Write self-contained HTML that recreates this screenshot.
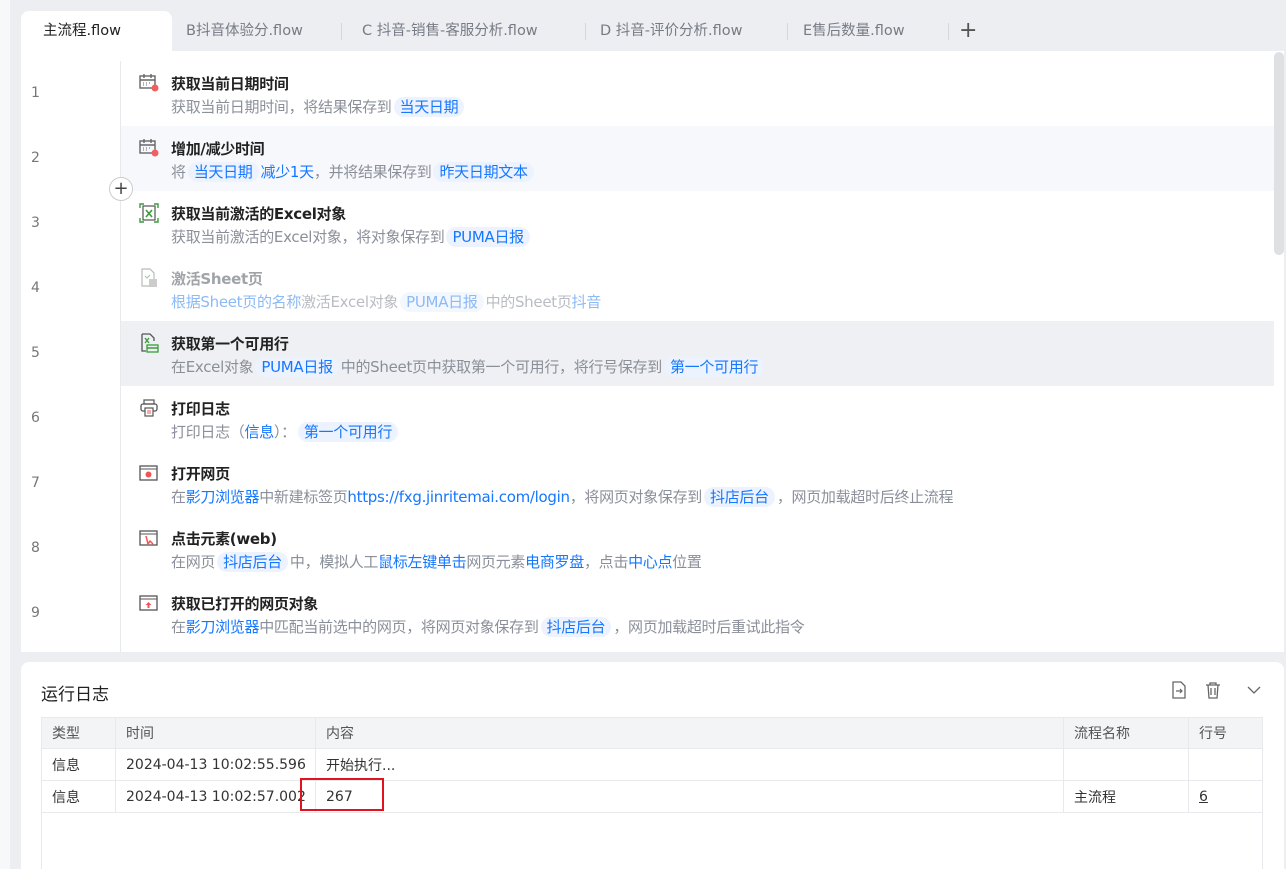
<!DOCTYPE html>
<html><head><meta charset="utf-8"><style>
*{margin:0;padding:0;box-sizing:border-box}
html,body{width:1286px;height:869px;overflow:hidden}
body{background:#eceef2;font-family:"DejaVu Sans","Noto Sans CJK SC",sans-serif;position:relative}
.lstrip{position:absolute;left:0;top:0;width:10px;height:869px;background:#f7f8fa}
.tabs{position:absolute;left:21px;top:11px;height:41px;width:1263px}
.tab{position:absolute;top:0;height:41px;line-height:40px;font-size:14.5px;color:#777b85}
.tab.active{background:#fff;border-radius:8px 8px 0 0;color:#222;padding-left:22px;width:151px;left:0}
.sep{position:absolute;top:12px;width:1px;height:17px;background:#d5d7dc}
.panel{position:absolute;left:21px;top:51px;width:1263px;height:601px;background:#fff;overflow:hidden}
.gut{position:absolute;left:99px;top:10px;width:1px;height:600px;background:#e8e9ec}
.row{position:absolute;left:100px;width:1153px;height:65px}
.num{position:absolute;left:10px;font-size:14px;color:#777}
.ic{position:absolute;left:18px;top:12px;width:20px;height:20px}
.t{position:absolute;left:50px;top:12px;font-size:15px;font-weight:bold;color:#222;letter-spacing:-0.3px}
.d{position:absolute;left:50px;top:35px;font-size:15px;color:#8a8f99;white-space:nowrap;letter-spacing:-0.3px}
.b{color:#1677ff}
.tag{background:#edf3fe;color:#1677ff;border-radius:10px;padding:1px 6px;margin:0 2px}
.dim .t{color:#a0a3a8}.dim .d{color:#b9bcc2}.dim .b{color:#8dbaf5}.dim .tag{color:#8dbaf5;background:#f3f7fe}
.scroll{position:absolute;left:1253px;top:1px;width:10px;height:203px;background:#dfe0e4;border-radius:5px}
.plus{position:absolute;left:109px;top:177px;width:24px;height:24px;border-radius:50%;border:1px solid #ccc;background:#fff;text-align:center;line-height:21px;font-size:18px;color:#444}
.log{position:absolute;left:21px;top:662px;width:1263px;height:207px;background:#fff;border-radius:8px 8px 0 0;overflow:hidden}
.lt{position:absolute;left:20px;top:18px;font-size:17px;color:#222}
table{position:absolute;left:20px;top:55px;width:1222px;border-collapse:collapse;font-size:14px;color:#333}
td{border:1px solid #e8e9ec;height:32px;padding-left:10px;white-space:nowrap}
tr.h td{background:#f3f4f6;height:31px;color:#555}
.empty{position:absolute;left:20px;top:150px;width:1222px;height:80px;border-left:1px solid #e8e9ec;border-right:1px solid #e8e9ec}
.red{position:absolute;left:279px;top:116px;width:84px;height:33px;border:2px solid #e0141e}
</style></head><body>
<div class="lstrip"></div>
<div class="tabs">
<div class="tab active">主流程.flow</div>
<div class="tab" style="left:165px">B抖音体验分.flow</div>
<div class="sep" style="left:320px"></div>
<div class="tab" style="left:341px">C 抖音-销售-客服分析.flow</div>
<div class="sep" style="left:564px"></div>
<div class="tab" style="left:579px">D 抖音-评价分析.flow</div>
<div class="sep" style="left:766px"></div>
<div class="tab" style="left:782px">E售后数量.flow</div>
<div class="sep" style="left:927px"></div>
<div class="tab" style="left:938px;font-size:22px;color:#555">+</div>
</div>
<div class="panel">
<div class="gut"></div>
<div class="num" style="top:34px">1</div><div class="num" style="top:99px">2</div><div class="num" style="top:164px">3</div><div class="num" style="top:229px">4</div><div class="num" style="top:294px">5</div><div class="num" style="top:359px">6</div><div class="num" style="top:424px">7</div><div class="num" style="top:489px">8</div><div class="num" style="top:554px">9</div>

<div class="row" style="top:10px"><svg class="ic" viewBox="0 0 20 20"><rect x="1" y="3" width="15" height="12" fill="none" stroke="#666" stroke-width="1.4"/><path d="M1 7h15M5 1v4M12 1v4" stroke="#666" stroke-width="1.4"/><path d="M4 10h1M7 10h1M10 10h1M4 12h1M7 12h1" stroke="#666"/><circle cx="16" cy="15" r="3.5" fill="#f06060"/></svg><div class="t">获取当前日期时间</div><div class="d">获取当前日期时间，将结果保存到<span class="tag">当天日期</span></div></div>
<div class="row" style="top:75px;background:#f7f8fc"><svg class="ic" viewBox="0 0 20 20"><rect x="1" y="3" width="15" height="12" fill="none" stroke="#666" stroke-width="1.4"/><path d="M1 7h15M5 1v4M12 1v4" stroke="#666" stroke-width="1.4"/><path d="M4 10h1M7 10h1M10 10h1M4 12h1M7 12h1" stroke="#666"/><circle cx="16" cy="15" r="3.5" fill="#f06060"/></svg><div class="t">增加/减少时间</div><div class="d">将<span class="tag">当天日期</span><span class="b">减少1天</span>，并将结果保存到<span class="tag">昨天日期文本</span></div></div>
<div class="row" style="top:140px"><svg class="ic" viewBox="0 0 20 20"><path d="M1 5V1h4M15 1h4v4M19 15v4h-4M5 19H1v-4" stroke="#3a9c3a" fill="none" stroke-width="1.4"/><rect x="4" y="3" width="12" height="14" fill="none" stroke="#555" stroke-width="1.2"/><path d="M7 7l6 7M13 7l-6 7" stroke="#3a9c3a" stroke-width="1.6"/></svg><div class="t">获取当前激活的Excel对象</div><div class="d">获取当前激活的Excel对象，将对象保存到<span class="tag">PUMA日报</span></div></div>
<div class="row dim" style="top:205px"><svg class="ic" viewBox="0 0 20 20"><path d="M3 1h8l4 4v13H3z" fill="none" stroke="#bbb" stroke-width="1.2"/><rect x="10" y="11" width="8" height="8" fill="#ccc"/><path d="M6 8l2 2 3-3" stroke="#9c9" fill="none"/></svg><div class="t">激活Sheet页</div><div class="d"><span class="b">根据Sheet页的名称</span>激活Excel对象<span class="tag">PUMA日报</span>中的Sheet页<span class="b">抖音</span></div></div>
<div class="row" style="top:270px;background:#eef0f4"><svg class="ic" viewBox="0 0 20 20"><path d="M3 1h8l4 4v3M3 1v17h4" fill="none" stroke="#555" stroke-width="1.3"/><rect x="8" y="12" width="11" height="7" fill="none" stroke="#3a9c3a" stroke-width="1.3"/><path d="M6 5l4 5M10 5l-4 5M8 15h11" stroke="#3a9c3a" stroke-width="1.4"/></svg><div class="t">获取第一个可用行</div><div class="d">在Excel对象<span class="tag">PUMA日报</span>中的Sheet页中获取第一个可用行，将行号保存到<span class="tag">第一个可用行</span></div></div>
<div class="row" style="top:335px"><svg class="ic" viewBox="0 0 20 20"><rect x="2" y="6" width="16" height="7" rx="2" fill="none" stroke="#555" stroke-width="1.3"/><rect x="5" y="2" width="10" height="4" fill="none" stroke="#555" stroke-width="1.2"/><rect x="6" y="10" width="8" height="8" fill="#fff" stroke="#555" stroke-width="1.2"/><path d="M8 13h4M8 15h4" stroke="#e55"/></svg><div class="t">打印日志</div><div class="d">打印日志（<span class="b">信息</span>）：<span class="tag">第一个可用行</span></div></div>
<div class="row" style="top:400px"><svg class="ic" viewBox="0 0 20 20"><rect x="1" y="3" width="17" height="14" fill="none" stroke="#555" stroke-width="1.3"/><path d="M1 6h17" stroke="#555"/><circle cx="9.5" cy="11.5" r="3" fill="#e55"/></svg><div class="t">打开网页</div><div class="d">在<span class="b">影刀浏览器</span>中新建标签页<span class="b">https://fxg.jinritemai.com/login</span>，将网页对象保存到<span class="tag">抖店后台</span>，网页加载超时后终止流程</div></div>
<div class="row" style="top:465px"><svg class="ic" viewBox="0 0 20 20"><rect x="1" y="3" width="17" height="14" fill="none" stroke="#555" stroke-width="1.3"/><path d="M1 6h17" stroke="#555"/><path d="M7 8l2 8 2-3 3 3" stroke="#e55" fill="none" stroke-width="1.5"/></svg><div class="t">点击元素(web)</div><div class="d">在网页<span class="tag">抖店后台</span>中，模拟人工<span class="b">鼠标左键单击</span>网页元素<span class="b">电商罗盘</span>，点击<span class="b">中心点</span>位置</div></div>
<div class="row" style="top:530px"><svg class="ic" viewBox="0 0 20 20"><rect x="1" y="3" width="17" height="14" fill="none" stroke="#555" stroke-width="1.3"/><path d="M1 6h17" stroke="#555"/><path d="M9.5 9l-3 3h2v3h2v-3h2z" fill="#e55"/></svg><div class="t">获取已打开的网页对象</div><div class="d">在<span class="b">影刀浏览器</span>中匹配当前选中的网页，将网页对象保存到<span class="tag">抖店后台</span>，网页加载超时后重试此指令</div></div>
<div class="scroll"></div>
</div>
<div class="plus">+</div>
<div class="log">
<div class="lt">运行日志</div>
<svg style="position:absolute;left:1150px;top:19px" width="16" height="18" viewBox="0 0 16 18"><path d="M2 1h8l4 4v12H2z" fill="none" stroke="#666" stroke-width="1.3"/><path d="M5 10h6M9 8l2 2-2 2" stroke="#666" fill="none" stroke-width="1.2"/></svg>
<svg style="position:absolute;left:1184px;top:19px" width="16" height="18" viewBox="0 0 16 18"><path d="M1 4h14M5 4V2h6v2M3 4l1 13h8l1-13M6 7v7M10 7v7" fill="none" stroke="#666" stroke-width="1.3"/></svg>
<svg style="position:absolute;left:1226px;top:23px" width="14" height="10" viewBox="0 0 14 10"><path d="M1 2l6 6 6-6" fill="none" stroke="#666" stroke-width="1.3"/></svg>
<table>
<tr class="h"><td style="width:74px">类型</td><td style="width:200px">时间</td><td style="width:748px">内容</td><td style="width:125px">流程名称</td><td>行号</td></tr>
<tr><td>信息</td><td>2024-04-13 10:02:55.596</td><td>开始执行...</td><td></td><td></td></tr>
<tr><td>信息</td><td>2024-04-13 10:02:57.002</td><td>267</td><td>主流程</td><td><u>6</u></td></tr>
</table>
<div class="empty"></div>
<div class="red"></div>
</div>
</body></html>
